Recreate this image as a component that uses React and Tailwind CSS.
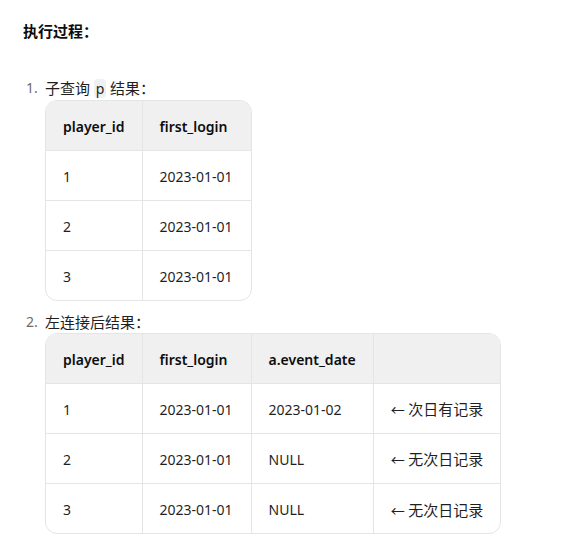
import React from "react";

const font = { fontFamily: '"Segoe UI", "Noto Sans", "Noto Sans CJK SC", sans-serif' };

// CJK runs are drawn a touch larger than the Latin text, as in the shot
const Cjk = ({ children }) => <span className="text-[15px]">{children}</span>;

const Table = ({ head, rows, className }) => (
  <div className={`inline-block overflow-hidden rounded-xl border border-[#e5e5e5] ${className}`}>
    <table className="border-collapse text-sm">
      <thead>
        <tr className="bg-[#f0f0f0]">
          {head.map((h, i) => (
            <th
              key={i}
              className={`h-[49px] px-[17px] pt-[4px] text-left font-semibold text-[#0d0d0d] ${i > 0 ? "border-l border-[#e5e5e5]" : ""} ${i === 1 ? "min-w-[109px]" : ""}`}
            >
              {h}
            </th>
          ))}
        </tr>
      </thead>
      <tbody>
        {rows.map((r, ri) => (
          <tr key={ri} className="border-t border-[#e5e5e5]">
            {r.map((c, ci) => (
              <td
                key={ci}
                className={`h-[50px] px-[17px] pt-[4px] text-[#1f1f1f] ${ci > 0 ? "border-l border-[#e5e5e5]" : ""}`}
              >
                {c}
              </td>
            ))}
          </tr>
        ))}
      </tbody>
    </table>
  </div>
);

export default function App() {
  return (
    <div className="min-h-screen bg-white px-[23px] pt-[21px] text-sm text-[#1f1f1f]" style={font}>
      <p className="font-bold leading-5 text-[#0d0d0d]">
        <Cjk>执行过程：</Cjk>
      </p>
      <ol className="mt-[36px]">
        <li className="flex">
          <span className="w-[22px] pl-[3px] leading-5 text-[#6b6b6b]">1.</span>
          <div>
            <div className="leading-5">
              <Cjk>子查询</Cjk>{" "}
              <code className="rounded bg-[#f0f0f0] px-[2px] text-sm" style={font}>p</code>{" "}
              <Cjk>结果：</Cjk>
            </div>
            <Table
              className="mt-px"
              head={["player_id", "first_login"]}
              rows={[
                ["1", "2023-01-01"],
                ["2", "2023-01-01"],
                ["3", "2023-01-01"],
              ]}
            />
          </div>
        </li>
        <li className="mt-[6px] flex">
          <span className="w-[22px] pl-[3px] leading-5 text-[#6b6b6b]">2.</span>
          <div>
            <div className="leading-5">
              <Cjk>左连接后结果：</Cjk>
            </div>
            <Table
              head={["player_id", "first_login", "a.event_date", ""]}
              rows={[
                ["1", "2023-01-01", "2023-01-02", <>← <Cjk>次日有记录</Cjk></>],
                ["2", "2023-01-01", "NULL", <>← <Cjk>无次日记录</Cjk></>],
                ["3", "2023-01-01", "NULL", <>← <Cjk>无次日记录</Cjk></>],
              ]}
            />
          </div>
        </li>
      </ol>
    </div>
  );
}
